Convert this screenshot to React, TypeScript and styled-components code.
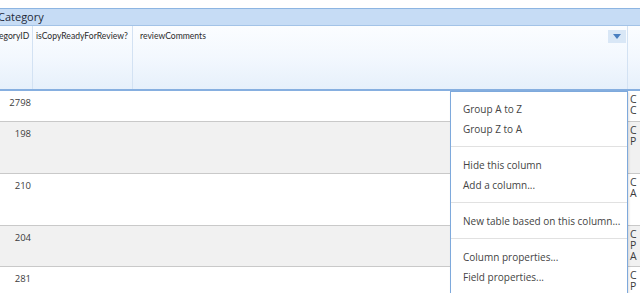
import React from "react";
import styled, { createGlobalStyle } from "styled-components";

const GlobalStyle = createGlobalStyle`
  html, body {
    margin: 0;
    padding: 0;
    background: #ffffff;
    overflow: hidden;
  }
  body {
    font-family: "Open Sans", "Noto Sans", sans-serif;
  }
`;

const Viewport = styled.div`
  position: relative;
  width: 640px;
  height: 293px;
  overflow: hidden;
  padding-top: 8px;
  box-sizing: border-box;
`;

// the grid is scrolled a little to the right, so its left part is cut off
const Scroller = styled.div`
  margin-left: -20px;
  width: 900px;
`;

const TitleBar = styled.div`
  height: 16px;
  background: #c6dcf5;
  border-top: 1px solid #8db5e2;
  border-bottom: 1px solid #a3c3e7;
  padding-left: 18px;
  font-size: 11px;
  line-height: 16px;
  color: #1e2a3a;
`;

const COLS = "53px 100px 495px 200px";

const HeaderRow = styled.div`
  display: grid;
  grid-template-columns: ${COLS};
  height: 63px;
  background: linear-gradient(to bottom, #fbfdff 0%, #f3f8fe 50%, #e6f0fb 100%);
  border-bottom: 2px solid #86afe0;
`;

const HeaderCell = styled.div<{ $pad?: number }>`
  position: relative;
  border-right: 1px solid #d3e2f3;
  padding: 5px 0 0 ${(p) => p.$pad ?? 3}px;
  font-family: "Lato", "Open Sans", sans-serif;
  font-size: 8.6px;
  color: #2a2a2a;
  white-space: nowrap;
  overflow: hidden;
`;

const DropButton = styled.div`
  position: absolute;
  top: 4px;
  right: 1px;
  width: 18px;
  height: 13px;
  background: #d9e7f6;
  display: flex;
  align-items: center;
  justify-content: center;
`;

const Row = styled.div<{ $h: number; $shade?: boolean }>`
  display: grid;
  grid-template-columns: ${COLS};
  height: ${(p) => p.$h}px;
  background: ${(p) => (p.$shade ? "#f1f1f1" : "#ffffff")};
  border-bottom: 1px solid #c9c9c9;
`;

const NumCell = styled.div`
  text-align: right;
  padding: 5px 2px 0 0;
  font-size: 9.5px;
  color: #3c3c3c;
`;

const Cell = styled.div<{ $line?: boolean }>`
  border-right: ${(p) => (p.$line ? "1px solid #c9c9c9" : "none")};
`;

const TextCell = styled.div`
  padding: 3px 0 0 2px;
  font-size: 10.5px;
  line-height: 11px;
  color: #3c3c3c;
  white-space: pre-line;
`;

const Menu = styled.div`
  position: absolute;
  left: 450px;
  top: 91px;
  width: 176px;
  height: 199px;
  background: #ffffff;
  border: 1px solid #7ea9dc;
  box-shadow: 1px 1px 2px rgba(0, 0, 0, 0.12);
  padding-top: 7px;
  box-sizing: content-box;
`;

const MenuItem = styled.div`
  height: 20px;
  line-height: 20px;
  padding-left: 12px;
  font-size: 10px;
  color: #444444;
  white-space: nowrap;
`;

const MenuSep = styled.div`
  height: 16px;
  display: flex;
  align-items: center;
  &::after {
    content: "";
    display: block;
    width: 100%;
    height: 1px;
    margin-top: -2px;
    background: #e1e1e1;
  }
`;

const rows = [
  { id: "2798", h: 30, text: "C\nC" },
  { id: "198", h: 51, shade: true, text: "C\nP" },
  { id: "210", h: 51, text: "C\nA" },
  { id: "204", h: 40, shade: true, text: "C\nP\nA" },
  { id: "281", h: 30, text: "C\nP" },
];

export default function App() {
  return (
    <>
      <GlobalStyle />
      <Viewport>
        <Scroller>
          <TitleBar>Category</TitleBar>
          <HeaderRow>
            <HeaderCell $pad={6}>CategoryID</HeaderCell>
            <HeaderCell>isCopyReadyForReview?</HeaderCell>
            <HeaderCell $pad={7}>
              reviewComments
              <DropButton>
                <svg width="8" height="5" viewBox="0 0 8 5">
                  <path d="M0 0 L8 0 L4 5 Z" fill="#4a7fc0" />
                </svg>
              </DropButton>
            </HeaderCell>
            <HeaderCell />
          </HeaderRow>
          {rows.map((r) => (
            <Row key={r.id} $h={r.h} $shade={r.shade}>
              <NumCell>{r.id}</NumCell>
              <Cell />
              <Cell $line />
              <TextCell>{r.text}</TextCell>
            </Row>
          ))}
        </Scroller>
        <Menu>
          <MenuItem>Group A to Z</MenuItem>
          <MenuItem>Group Z to A</MenuItem>
          <MenuSep />
          <MenuItem>Hide this column</MenuItem>
          <MenuItem>Add a column...</MenuItem>
          <MenuSep />
          <MenuItem>New table based on this column...</MenuItem>
          <MenuSep />
          <MenuItem>Column properties...</MenuItem>
          <MenuItem>Field properties...</MenuItem>
        </Menu>
      </Viewport>
    </>
  );
}
